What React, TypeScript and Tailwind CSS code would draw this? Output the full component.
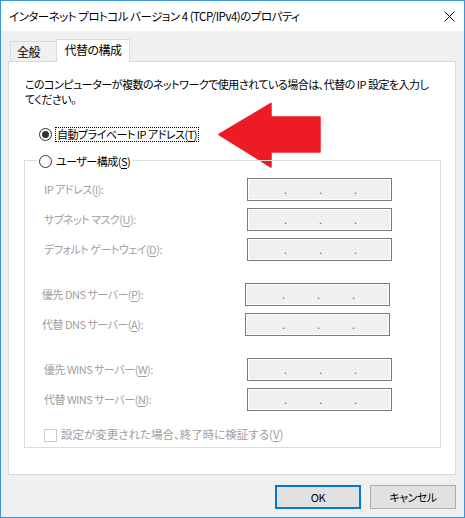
import React from "react";

const U = ({ c }: { c: string }) => <span className="underline underline-offset-[2px]">{c}</span>;

function IpBox() {
  return (
    <div className="w-[145px] h-[23px] border border-[#7a7a7a] bg-[#f0f0f0] shadow-[inset_0_0_0_1px_#ffffff] flex items-center pl-[36px] text-[#6d6d6d] leading-none shrink-0">
      <span className="w-[35px]">.</span>
      <span className="w-[35px]">.</span>
      <span className="w-[35px]">.</span>
    </div>
  );
}

function Row({ label, pl }: { label: React.ReactNode; pl: string }) {
  return (
    <div className={`flex items-center h-[23px] ${pl}`}>
      <div className="w-[203px] text-[#a0a0a0] whitespace-nowrap">{label}</div>
      <IpBox />
    </div>
  );
}

export default function App() {
  return (
    <div className="w-[465px] h-[518px] border border-[#3c95dc] bg-[#f0f0f0] flex flex-col font-['Noto_Sans_CJK_JP',sans-serif] [font-feature-settings:'palt'] text-[11px] tracking-[-0.5px] text-black overflow-hidden">
      {/* title bar */}
      <div className="h-[30px] bg-white flex items-center justify-between pl-[8px] pr-[9px] shrink-0">
        <span className="whitespace-nowrap leading-[16px] text-[11.5px]">インターネット プロトコル バージョン 4 (TCP/IPv4)のプロパティ</span>
        <svg width="11" height="11" viewBox="0 0 11 11" className="shrink-0">
          <path d="M0.5 0.5 L10.5 10.5 M10.5 0.5 L0.5 10.5" stroke="#000" strokeWidth="1" />
        </svg>
      </div>

      {/* body */}
      <div className="flex flex-col pl-[7px] pr-[8px]">
        {/* tabs */}
        <div className="mt-[8px] h-[22px] flex items-start pl-[2px]">
          <div className="mt-[2px] h-[20px] w-[47px] border border-b-0 border-[#d9d9d9] bg-[#f0f0f0] flex items-center justify-center pr-[10px] leading-none text-[12px]">
            全般
          </div>
          <div className="relative z-10 -ml-[1px] h-[23px] w-[74px] border border-b-0 border-[#d9d9d9] bg-white flex items-center justify-center pb-[2px] leading-none text-[12px]">
            代替の構成
          </div>
        </div>

        {/* panel */}
        <div className="relative h-[414px] w-[448px] border border-[#d9d9d9] bg-white flex flex-col">
          <div className="pt-[15px] pl-[16px] leading-[15px] whitespace-nowrap">
            <div>このコンピューターが複数のネットワークで使用されている場合は、代替の IP 設定を入力し</div>
            <div>てください。</div>
          </div>

          {/* radio 1 */}
          <div className="mt-[19px] h-[16px] flex items-center pl-[30px]">
            <div className="w-[13px] h-[13px] rounded-full border border-[#333333] bg-white flex items-center justify-center shrink-0">
              <div className="w-[7px] h-[7px] rounded-full bg-[#333333]" />
            </div>
            <div className="ml-[3px] h-[15px] px-[1px] border border-dotted border-[#000] flex items-center leading-none whitespace-nowrap">
              自動プライベート IP アドレス(<U c="T" />)
            </div>
          </div>

          {/* arrow */}
          <svg className="absolute left-[209px] top-[40px]" width="104" height="67" viewBox="0 0 104 67">
            <polygon
              points="1,32.5 53,1.5 53,15 102,15 102,50 53,50 53,65"
              fill="#ed1c24"
              stroke="#ed1c24"
              strokeWidth="1.5"
              strokeLinejoin="round"
            />
          </svg>

          {/* group box */}
          <div className="relative mt-[18px] ml-[15px] w-[417px] h-[288px] border border-[#dcdcdc] flex flex-col">
            <div className="absolute -top-[8px] left-[12px] h-[16px] bg-white flex items-center pl-[2px] pr-[2px]">
              <div className="w-[13px] h-[13px] rounded-full border border-[#333333] bg-white shrink-0" />
              <span className="ml-[4px] leading-none whitespace-nowrap">ユーザー構成(<U c="S" />)</span>
            </div>

            <div className="pt-[17px] flex flex-col gap-[7px]">
              <Row pl="pl-[19px]" label={<>IP アドレス(<U c="I" />):</>} />
              <Row pl="pl-[19px]" label={<>サブネット マスク(<U c="U" />):</>} />
              <Row pl="pl-[19px]" label={<>デフォルト ゲートウェイ(<U c="D" />):</>} />
            </div>
            <div className="mt-[22px] flex flex-col gap-[7px]">
              <Row pl="pl-[17px]" label={<>優先 DNS サーバー(<U c="P" />):</>} />
              <Row pl="pl-[17px]" label={<>代替 DNS サーバー(<U c="A" />):</>} />
            </div>
            <div className="mt-[22px] flex flex-col gap-[7px]">
              <Row pl="pl-[19px]" label={<>優先 WINS サーバー(<U c="W" />):</>} />
              <Row pl="pl-[19px]" label={<>代替 WINS サーバー(<U c="N" />):</>} />
            </div>

            <div className="mt-[17px] h-[14px] flex items-center pl-[19px]">
              <div className="w-[13px] h-[13px] border border-[#cccccc] bg-white shrink-0" />
              <span className="ml-[4px] text-[#a0a0a0] leading-none whitespace-nowrap text-[11.5px] tracking-normal">
                設定が変更された場合、終了時に検証する(<U c="V" />)
              </span>
            </div>
          </div>
        </div>

        {/* buttons */}
        <div className="mt-[10px] flex justify-end gap-[9px]">
          <button className="w-[86px] h-[24px] border-2 border-[#0078d7] bg-[#e1e1e1] flex items-center justify-center leading-none">
            OK
          </button>
          <button className="w-[86px] h-[24px] border border-[#adadad] bg-[#e1e1e1] flex items-center justify-center leading-none">
            キャンセル
          </button>
        </div>
      </div>
    </div>
  );
}
